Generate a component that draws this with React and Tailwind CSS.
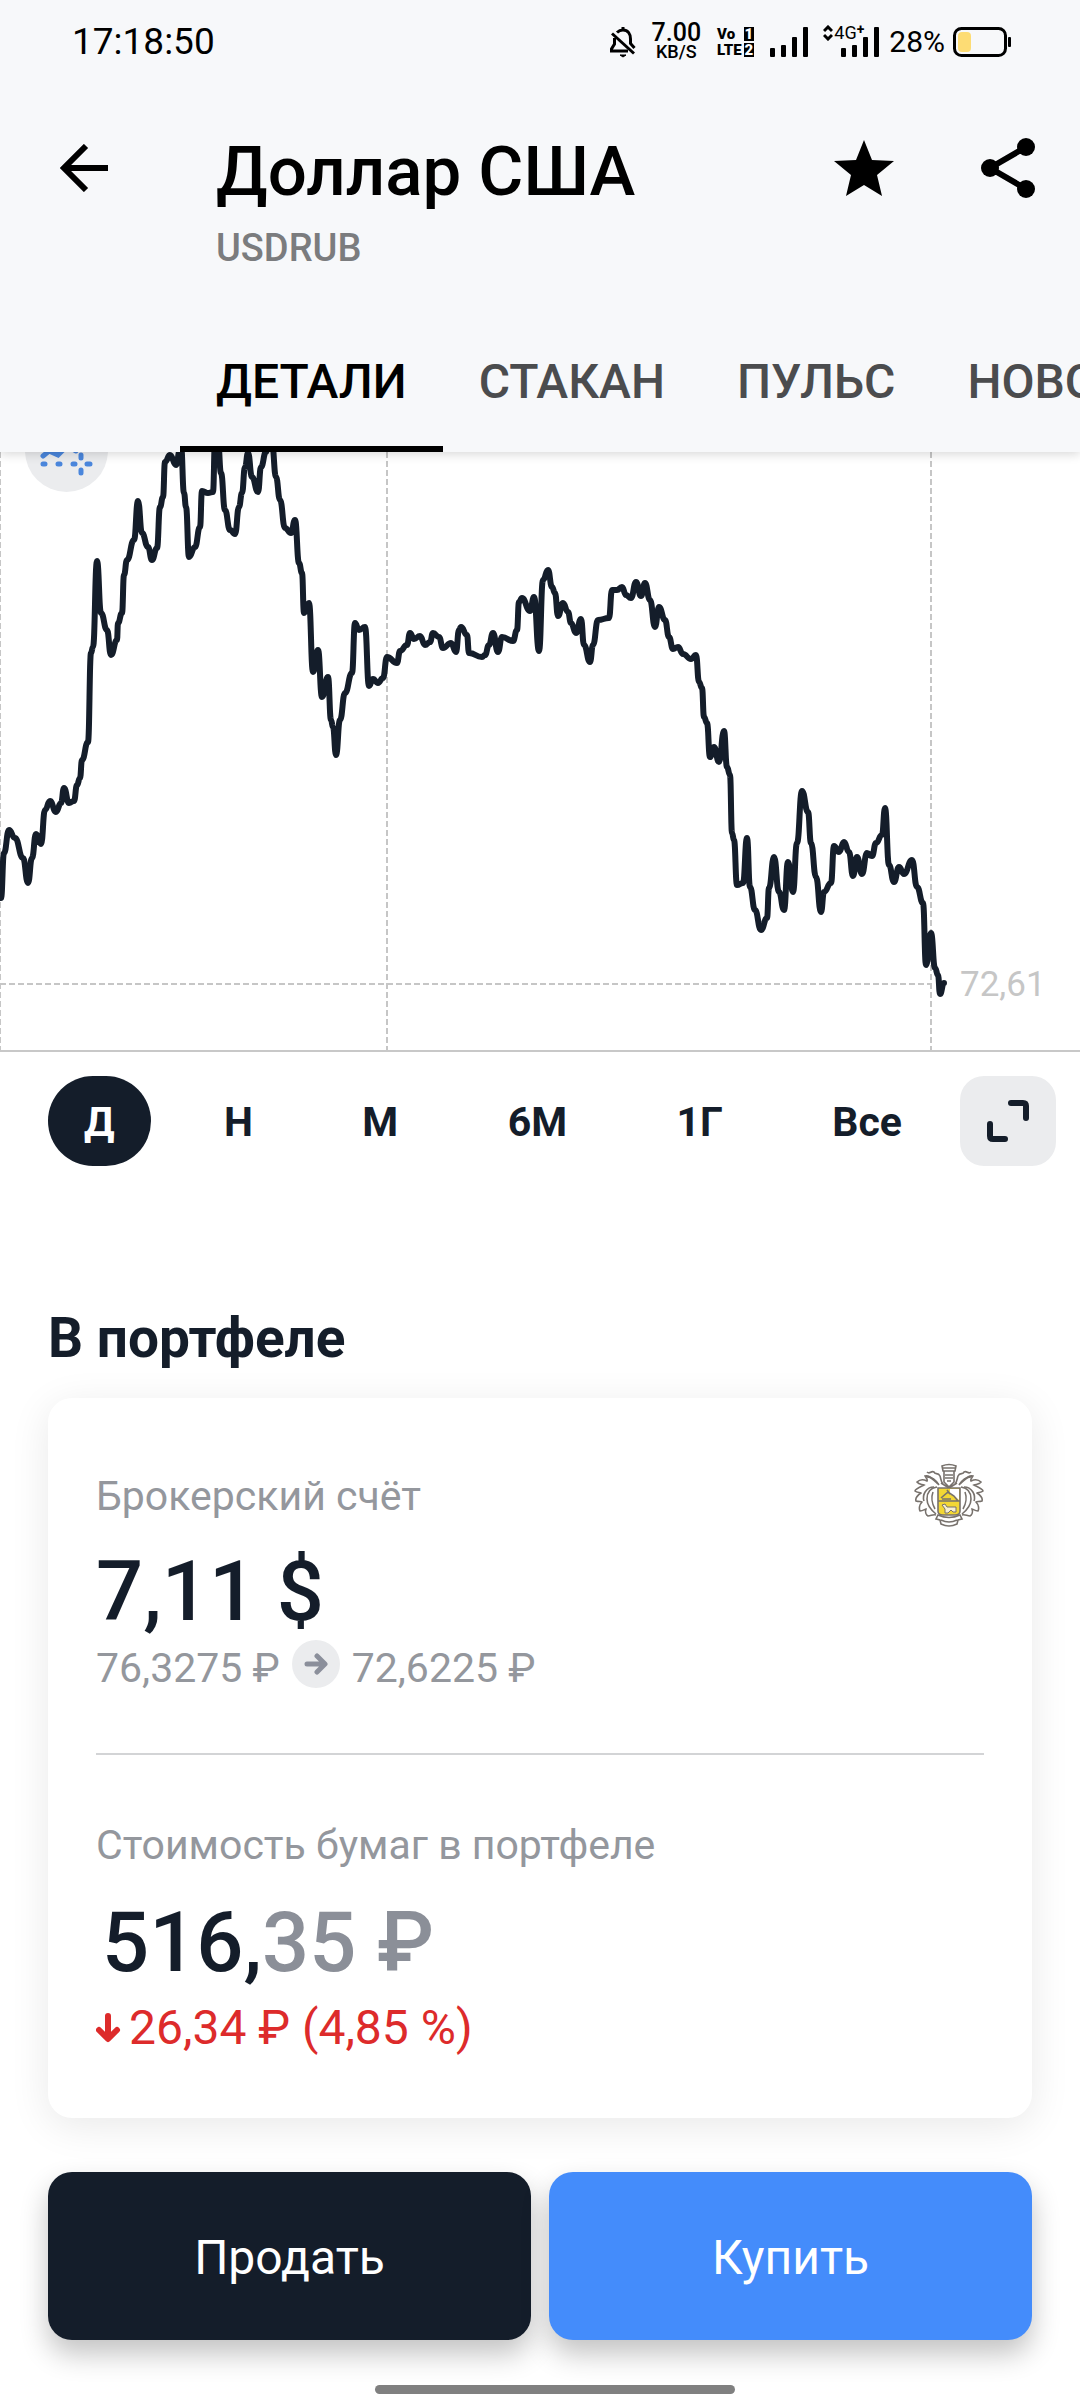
import { useState } from "react";

const tabs = ["ДЕТАЛИ", "СТАКАН", "ПУЛЬС", "НОВОСТИ"];
const periods = ["Д", "Н", "М", "6М", "1Г", "Все"];

const points =
  "1,446 4,401 9,378 15,386 23,406 28,431 32,406 36,382 41,392 45,358 50,349 56,360 61,351 64,336 69,351 74,349 77,333 80,326 82,308 88,290 91,201 93,195 97,109 101,161 107,178 111,203 117,188 118,171 122,161 124,123 127,108 134,88 138,49 142,81 148,95 152,108 157,96 160,55 163,45 165,10 170,3 176,13 180,-2 181,-6 184,41 186,55 189,105 195,95 200,75 202,39 208,41 213,40 215,-10 218,-10 221,21 225,58 230,78 235,82 239,55 242,41 245,15 248,1 252,25 258,40 261,15 266,0 268,-8 272,-8 276,25 280,48 285,76 291,81 295,68 299,111 302,121 304,161 309,151 313,220 318,198 322,245 328,225 331,268 333,275 336,303 340,268 345,241 352,221 355,171 359,178 365,175 369,234 373,227 378,231 383,226 387,205 397,211 400,199 407,193 410,181 414,187 420,184 425,193 430,190 433,181 439,185 443,196 451,191 456,200 459,178 461,175 467,183 469,201 482,205 485,203 489,193 493,181 498,200 502,185 513,189 517,178 519,150 522,146 530,159 534,145 539,199 543,128 548,118 552,135 555,141 558,164 563,151 568,160 571,171 576,181 581,167 584,193 590,210 593,193 598,168 609,166 612,138 617,138 622,135 626,143 631,146 636,130 641,144 645,131 650,148 655,175 659,155 665,168 669,185 673,197 678,195 683,202 691,207 696,203 699,230 702,236 704,265 707,271 710,305 714,295 719,310 724,279 727,315 730,323 732,381 734,388 737,433 743,431 747,386 750,435 755,458 761,478 767,466 769,436 774,405 779,440 784,458 788,410 793,440 797,391 802,339 808,360 811,391 816,425 821,460 824,440 831,431 834,394 839,400 844,390 849,400 853,424 857,405 862,422 867,401 872,404 876,391 882,383 885,356 889,413 894,430 899,415 904,422 912,408 917,435 923,451 926,513 931,481 935,516 938,523 940,542 944,531";

// joins the points with curves that leave and enter each point horizontally
const linePath = points
  .split(" ")
  .map((p) => p.split(",").map(Number))
  .map(([x, y], i, all) => {
    if (i === 0) return `M${x} ${y}`;
    const [px, py] = all[i - 1];
    const mid = (px + x) / 2;
    return `C${mid} ${py} ${mid} ${y} ${x} ${y}`;
  })
  .join("");

function SignalBars() {
  return (
    <svg width="38" height="30" viewBox="0 0 38 30" aria-hidden="true">
      <rect x="0" y="21" width="5" height="9" rx="1" />
      <rect x="11" y="18" width="5" height="12" rx="1" />
      <rect x="22" y="10" width="5" height="20" rx="1" />
      <rect x="33" y="0" width="5" height="30" rx="1" />
    </svg>
  );
}

function StatusBar() {
  return (
    <div className="flex h-[84px] items-center justify-between pr-[68px] pl-[72px] text-black">
      <span className="text-[37px] leading-[48px]">17:18:50</span>

      <div className="flex items-center">
        <svg
          width="26"
          height="32"
          viewBox="0 0 26 32"
          fill="none"
          stroke="currentColor"
          strokeWidth="3"
          aria-hidden="true"
        >
          <path d="M7 6.500C9 4.500 11 4 13 4C18 4 20.500 8 20.500 13V17.500L24.500 22" />
          <path d="M4.500 12V18L1.500 23V25H18" />
          <path d="M2 7.500L24 27.500" />
          <path d="M13 1V4" />
          <path d="M10 29H16L13 31Z" fill="currentColor" strokeWidth="1" />
        </svg>

        <div className="ml-4 flex flex-col items-center font-medium">
          <span className="text-[25px] leading-[20px]">7.00</span>
          <span className="text-[18px] leading-[18px]">KB/S</span>
        </div>

        <div className="ml-4 grid grid-cols-[auto_auto] gap-x-[2px] gap-y-[2px] text-[15px] leading-[14px] font-black">
          <span>Vo</span>
          <span className="bg-black px-[1px] text-center text-white">1</span>
          <span>LTE</span>
          <span className="bg-black px-[1px] text-center text-white">2</span>
        </div>

        <div className="ml-4">
          <SignalBars />
        </div>

        <div className="relative ml-[33px]">
          <SignalBars />
          <div className="absolute -top-1 -left-[18px] flex items-center">
            <svg
              width="10"
              height="16"
              viewBox="0 0 10 16"
              fill="none"
              stroke="currentColor"
              strokeWidth="3"
              aria-hidden="true"
            >
              <path d="M1 6L5 2L9 6M1 10L5 14L9 10" />
            </svg>
            <span className="ml-[1px] text-[18px] leading-[20px]">4G</span>
            <span className="-mt-2 text-[14px] leading-[14px] font-bold">+</span>
          </div>
        </div>

        <span className="ml-[10px] text-[30px] leading-[32px]">28%</span>

        <svg className="ml-2" width="59" height="30" viewBox="0 0 59 30" aria-hidden="true">
          <rect
            x="1.500"
            y="1.500"
            width="51"
            height="27"
            rx="7"
            fill="none"
            stroke="black"
            strokeWidth="3"
          />
          <rect x="5" y="5" width="13" height="20" rx="4" fill="#fddc74" />
          <rect x="55" y="10" width="3" height="10" rx="1" />
        </svg>
      </div>
    </div>
  );
}

function Header({ tab, onTab }) {
  return (
    <header className="relative z-10 overflow-hidden bg-[#f7f8fa] shadow-[0_2px_10px_rgba(0,0,0,0.16)]">
      <StatusBar />

      <div className="mt-12 flex items-start pr-[44px] pl-[60px]">
        <button type="button" aria-label="Назад" className="mt-3">
          <svg
            width="48"
            height="48"
            viewBox="0 0 48 48"
            fill="none"
            stroke="black"
            strokeWidth="6"
          >
            <path d="M26 2L4 24L26 46M4 24H48" />
          </svg>
        </button>

        <div className="ml-[108px] flex-1">
          <h1 className="text-[69px] leading-[80px] font-medium text-black">
            Доллар США
          </h1>
          <p className="mt-3 text-[38px] leading-[48px] font-medium text-[#7b7c7e]">
            USDRUB
          </p>
        </div>

        <button type="button" aria-label="В избранное" className="mt-2">
          <svg width="60" height="56" viewBox="0 0 60 56">
            <path d="M30 0L38 20L60 21L43 35L48 56L30 45L12 56L17 35L0 21L22 20Z" />
          </svg>
        </button>
        <button type="button" aria-label="Поделиться" className="ml-[86px] mt-[6px]">
          <svg width="56" height="60" viewBox="0 0 56 60">
            <path
              d="M46 9L10 30L46 51"
              fill="none"
              stroke="black"
              strokeWidth="6"
            />
            <circle cx="46" cy="9" r="9" />
            <circle cx="10" cy="30" r="9" />
            <circle cx="46" cy="51" r="9" />
          </svg>
        </button>
      </div>

      <nav className="mt-[38px] flex pl-[180px]">
        {tabs.map((item) => (
          <button
            key={item}
            type="button"
            onClick={() => onTab(item)}
            className={
              item === tab
                ? "h-[142px] shrink-0 border-y-[6px] border-t-transparent border-b-black px-9 pt-[2px] text-[48px] font-medium text-black"
                : "h-[142px] shrink-0 border-y-[6px] border-transparent px-9 pt-[2px] text-[48px] font-medium text-[#4b4c4e]"
            }
          >
            {item}
          </button>
        ))}
      </nav>
    </header>
  );
}

function PriceChart() {
  return (
    <section className="relative overflow-hidden">
      <svg className="block w-full" viewBox="0 0 1080 600" aria-label="График цены">
        <g stroke="#c6c6c6" strokeWidth="2" strokeDasharray="6 3">
          <path d="M0 0V598M387 0V598M931 0V598" />
          <path d="M0 532H931" />
        </g>
        <path d="M0 599H1080" stroke="#c8c8c8" strokeWidth="2" />
        <path
          d={linePath}
          fill="none"
          stroke="#141d2a"
          strokeWidth="6"
          strokeLinejoin="round"
          strokeLinecap="round"
        />
        <text x="960" y="544" fontSize="35" fill="#c6c6c6">
          72,61
        </text>
      </svg>

      <button
        type="button"
        aria-label="Индикаторы"
        className="absolute -top-[43px] left-[25px] flex size-[83px] items-center justify-center rounded-full bg-[#ebecee]"
      >
        <svg
          width="54"
          height="54"
          viewBox="0 0 54 54"
          fill="none"
          stroke="#4a86dc"
          strokeWidth="5"
          strokeLinecap="round"
        >
          <path d="M3 32L9 27L18 31L27 22L36 27" />
          <path d="M3 40H5M18 40H20M33 40H35M47 40H50M41 31V34M41 46V49" />
        </svg>
      </button>
    </section>
  );
}

function PeriodPicker() {
  const [period, setPeriod] = useState("Д");

  return (
    <div className="mt-6 flex items-center pr-6 pl-12">
      <div className="flex flex-1 justify-between pr-[22px]">
        {periods.map((item) => (
          <button
            key={item}
            type="button"
            onClick={() => setPeriod(item)}
            className={
              item === period
                ? "h-[90px] rounded-full bg-[#141d2a] px-9 pt-1 text-[41px] font-bold text-white"
                : "h-[90px] rounded-full px-9 pt-1 text-[41px] font-bold text-[#141d2a]"
            }
          >
            {item}
          </button>
        ))}
      </div>
      <button
        type="button"
        aria-label="На весь экран"
        className="flex h-[90px] w-24 items-center justify-center rounded-3xl bg-[#ebecee]"
      >
        <svg
          width="42"
          height="42"
          viewBox="0 0 42 42"
          fill="none"
          stroke="#141d2a"
          strokeWidth="6"
          strokeLinecap="round"
        >
          <path d="M24 3H36Q39 3 39 6V18M3 24V36Q3 39 6 39H18" />
        </svg>
      </button>
    </div>
  );
}

function CoatOfArms() {
  const leaves = (
    <g>
      <path d="M24 21C17 14 14 12 11 13C12 15 14 16 13 18C9 16 5 17 3 19C5 22 8 21 10 22C6 24 1 26 1 28C3 30 6 29 7 30C4 32 1 35 2 38C5 39 7 38 8 39C5 42 5 46 6 48C9 48 11 46 12 46C11 49 12 52 14 53C17 53 19 51 22 52" />
      <path d="M23 24C16 25 13 30 13 36C13 42 17 47 22 51" />
      <path d="M20 24C12 24 8 32 10 38M19 29C17 34 18 41 21 46" />
      <path d="M13 9C16 12 17 7 20 9C21 12 24 9 26 13C27 16 27 19 29 21M13 14C17 14 22 17 25 22" />
    </g>
  );

  return (
    <svg
      width="70"
      height="66"
      viewBox="0 0 70 66"
      fill="none"
      stroke="#77716c"
      strokeWidth="1.600"
      aria-label="Тинькофф"
    >
      {leaves}
      <g transform="translate(70 0) scale(-1 1)">{leaves}</g>
      <path d="M28 3Q35 0 42 3L41 8H29ZM29 5H41M30 8H40V19L35 24L30 19ZM31 12H39M31 15H39M33 18H37M27 20L35 25L43 20" />
      <path d="M24 25H46V48Q46 52 41 52H29Q24 52 24 48Z" fill="#f3d734" />
      <path d="M36 26H45V37Q40 32 36 31Z" fill="#fff" stroke="none" />
      <path d="M24 38H46M27 35L34 29L40 33L44 38M28 36L37 36M33 27L36 31" />
      <path
        d="M28 42L31 41L33 44H42V49H39L37 47L34 50H31V46Z"
        fill="#f7efd0"
        strokeWidth="1"
      />
      <path d="M24 52Q35 57 46 52L48 56L44 57L43 61Q35 65 27 61L26 57L22 56ZM27 57Q35 61 43 57" />
    </svg>
  );
}

function PortfolioCard() {
  return (
    <div className="mx-12 mt-7 rounded-3xl bg-white px-12 pt-[74px] pb-[62px] shadow-[0_8px_40px_rgba(0,0,0,0.09)]">
      <div className="flex h-12 items-center justify-between">
        <span className="text-[41px] leading-[48px] text-[#94979d]">
          Брокерский счёт
        </span>
        <CoatOfArms />
      </div>
      <p className="mt-6 text-[83px] leading-[96px] font-medium text-[#141d2a]">
        7,11 $
      </p>
      <div className="flex h-[52px] items-start text-[41px] leading-[48px] text-[#94979d]">
        <span className="self-end">76,3275 ₽</span>
        <span className="mx-3 flex size-12 items-center justify-center rounded-full bg-[#ebecee]">
          <svg
            width="24"
            height="22"
            viewBox="0 0 24 22"
            fill="none"
            stroke="#8b8f9b"
            strokeWidth="5"
            strokeLinecap="round"
            strokeLinejoin="round"
            aria-hidden="true"
          >
            <path d="M3 11H20M13 3L21 11L13 19" />
          </svg>
        </span>
        <span className="self-end">72,6225 ₽</span>
      </div>

      <hr className="mt-[61px] border-t-2 border-[#d3d4d6]" />

      <p className="mt-[66px] text-[41px] leading-[48px] text-[#94979d]">
        Стоимость бумаг в портфеле
      </p>
      <p className="mt-[26px] pl-[6px] text-[83px] leading-[96px] font-medium text-[#141d2a]">
        516,<span className="text-[#8b8f98]">35 ₽</span>
      </p>
      <p className="mt-[9px] flex items-center text-[48px] leading-[56px] text-[#dd2b2b]">
        <svg
          className="mr-2"
          width="25"
          height="32"
          viewBox="0 0 25 32"
          fill="none"
          stroke="currentColor"
          strokeWidth="6"
          strokeLinecap="round"
          strokeLinejoin="round"
          aria-hidden="true"
        >
          <path d="M12 4V26M3 18L12 27L21 18" />
        </svg>
        26,34 ₽ (4,85 %)
      </p>
    </div>
  );
}

export default function App() {
  const [tab, setTab] = useState("ДЕТАЛИ");

  return (
    <div className="min-h-screen overflow-hidden bg-white font-[Roboto,sans-serif]">
      <Header tab={tab} onTab={setTab} />

      <main>
        <PriceChart />
        <PeriodPicker />

        <h2 className="mt-[140px] px-12 text-[55px] leading-[64px] font-bold text-[#141d2a]">
          В портфеле
        </h2>
        <PortfolioCard />
      </main>

      <footer className="mt-[54px] px-12 pb-[6px]">
        <div className="flex gap-[18px] text-[48px] text-white">
          <button
            type="button"
            className="h-[168px] flex-1 rounded-3xl bg-[#141d2a] pt-1 shadow-[0_14px_28px_rgba(0,0,0,0.24)]"
          >
            Продать
          </button>
          <button
            type="button"
            className="h-[168px] flex-1 rounded-3xl bg-[#448cfb] pt-1 shadow-[0_14px_28px_rgba(0,0,0,0.24)]"
          >
            Купить
          </button>
        </div>
        <div className="mt-[45px] flex justify-center pl-[30px]">
          <div className="relative h-[9px] w-[360px] rounded-full bg-[#808080]" />
        </div>
      </footer>
    </div>
  );
}
